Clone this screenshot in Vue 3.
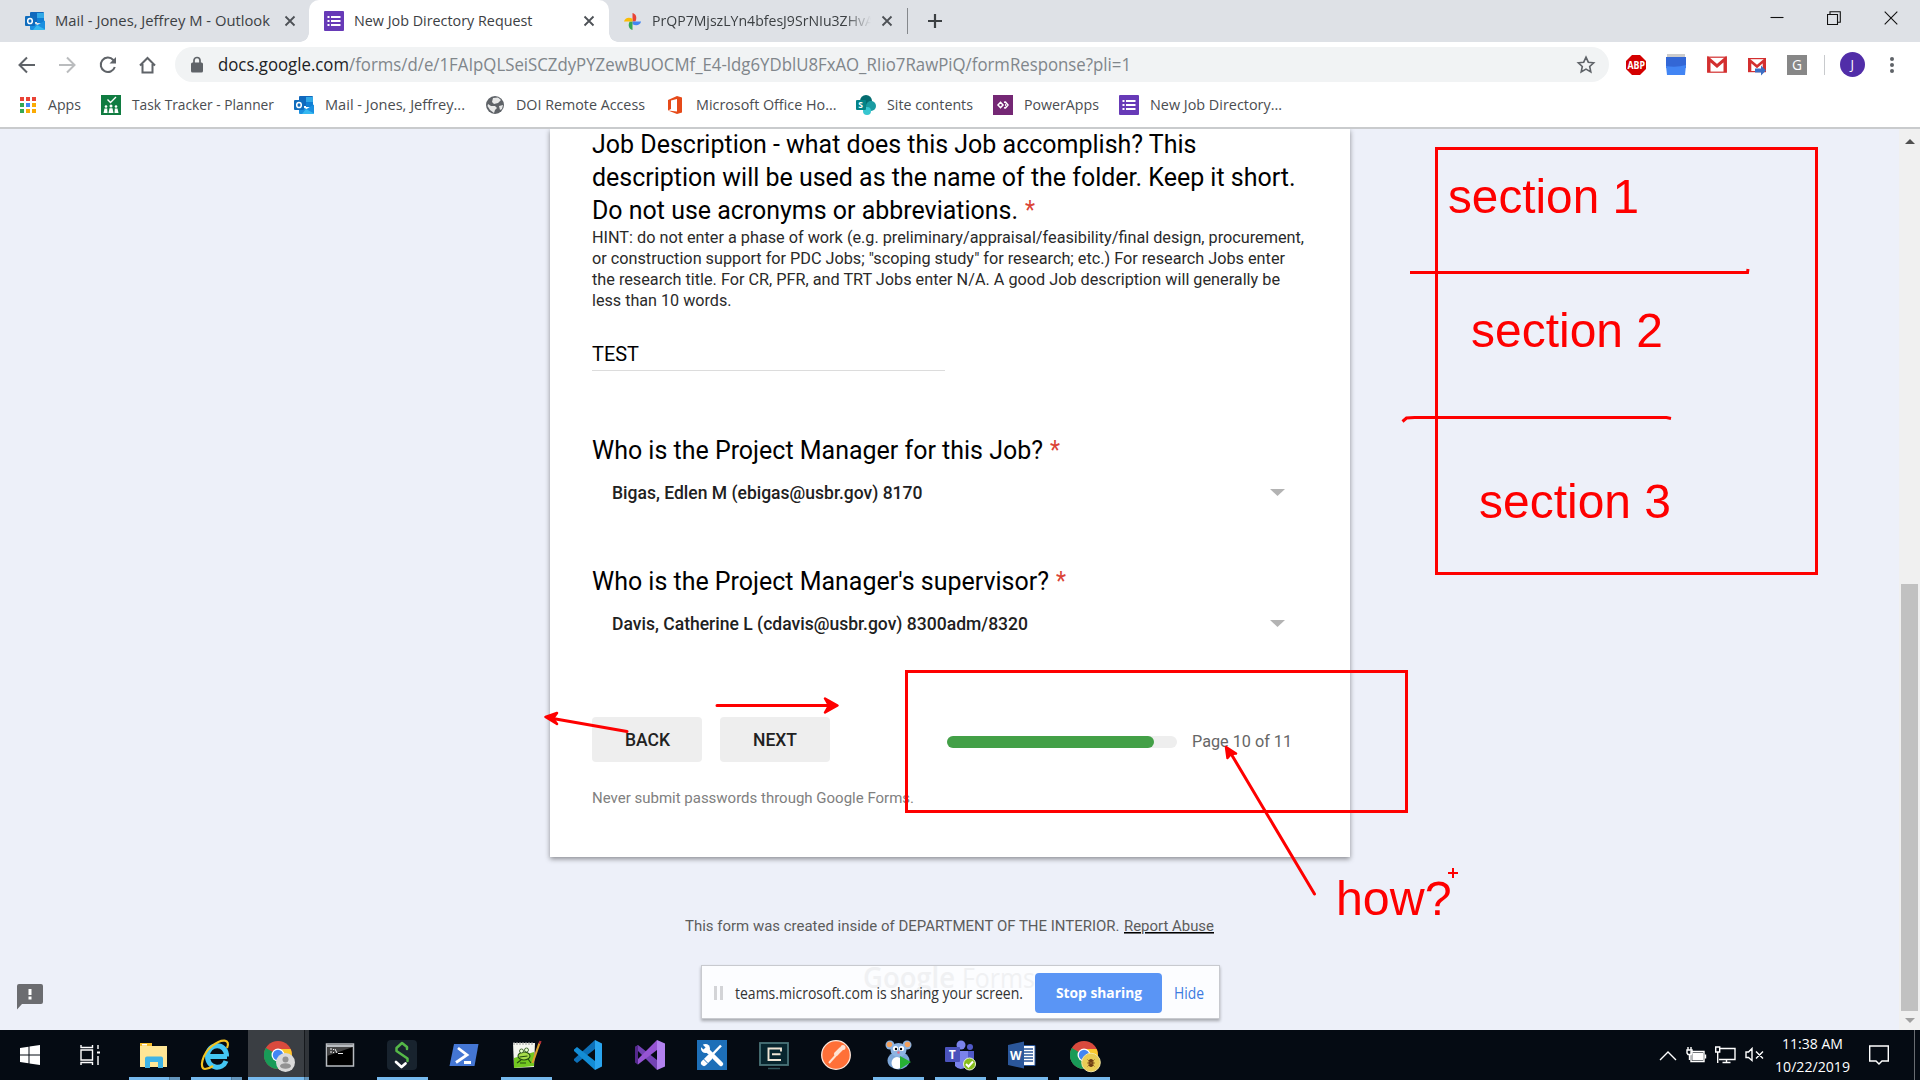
<script setup>
import { h } from 'vue'

// One line of text set to a fixed measure: w = width, h = line box height, b = baseline
const Fit = (p) =>
  h('svg', { width: p.w, height: p.h, style: 'display:block;overflow:visible;flex:none' }, [
    h('text', { x: 0, y: p.b, textLength: p.w, lengthAdjust: 'spacingAndGlyphs', fill: 'currentColor' }, p.t)
  ])
Fit.props = ['t', 'w', 'h', 'b']

const Ico = (p) => h('svg', { width: p.s, height: p.s, style: 'display:block;flex:none' }, [h('use', { href: '#' + p.n })])
Ico.props = ['n', 's']

const bookmarks = [
  { n: 'apps', t: 'Apps', w: 33 },
  { n: 'planner', t: 'Task Tracker - Planner', w: 142 },
  { n: 'outlook', t: 'Mail - Jones, Jeffrey...', w: 140 },
  { n: 'globe', t: 'DOI Remote Access', w: 129 },
  { n: 'office', t: 'Microsoft Office Ho...', w: 140.5 },
  { n: 'sharepoint', t: 'Site contents', w: 86 },
  { n: 'powerapps', t: 'PowerApps', w: 75 },
  { n: 'forms', t: 'New Job Directory...', w: 132 }
]
const hints = [
  { t: 'HINT: do not enter a phase of work (e.g. preliminary/appraisal/feasibility/final design, procurement,', w: 712 },
  { t: 'or construction support for PDC Jobs; "scoping study" for research; etc.) For research Jobs enter', w: 693 },
  { t: 'the research title. For CR, PFR, and TRT Jobs enter N/A. A good Job description will generally be', w: 688 },
  { t: 'less than 10 words.', w: 139.5 }
]
const questions = [
  { q: 'Who is the Project Manager for this Job?', w: 451, a: 'Bigas, Edlen M (ebigas@usbr.gov) 8170', aw: 310.5 },
  { q: "Who is the Project Manager's supervisor?", w: 457, a: 'Davis, Catherine L (cdavis@usbr.gov) 8300adm/8320', aw: 416 }
]
const tasks = [
  { n: 'explorer', c: 'open multi' },
  { n: 'ie', c: 'open multi' },
  { n: 'chromeuser', c: 'open multi active' },
  { n: 'cmd', c: '' },
  { n: 'snake', c: 'open' },
  { n: 'powershell', c: '' },
  { n: 'notepad', c: 'open' },
  { n: 'vscode', c: '' },
  { n: 'vs', c: '' },
  { n: 'tools', c: '' },
  { n: 'monitor', c: '' },
  { n: 'postman', c: '' },
  { n: 'mouse', c: 'open' },
  { n: 'teams', c: 'open' },
  { n: 'word', c: 'open' },
  { n: 'chromebug', c: 'open' }
]
</script>

<template>
  <div class="screen">
    <svg class="sheet" width="0" height="0">
      <symbol id="outlook" viewBox="0 0 20 20">
        <path d="M6 1h12a1 1 0 0 1 1 1v9H5V2a1 1 0 0 1 1-1z" fill="#1068bd" />
        <path d="M12 2h7v5h-7z" fill="#32a9e7" /><path d="M12 7h7v5h-7z" fill="#0f7ed4" />
        <path d="M5 10l7.500 4L20 9.500V18a1 1 0 0 1-1 1H6a1 1 0 0 1-1-1z" fill="#1a8fe0" />
        <path d="M12 14l8 4.500a1 1 0 0 1-1 .5H8z" fill="#35b8f1" />
        <rect y="5" width="10" height="10" rx="1" fill="#0f6cbd" />
        <ellipse cx="5" cy="10" rx="2.300" ry="2.600" fill="none" stroke="#fff" stroke-width="1.500" />
      </symbol>
      <symbol id="forms" viewBox="0 0 20 20">
        <rect width="20" height="20" rx="1" fill="#673ab7" />
        <g fill="#fff"><path d="M3.500 5h2v2h-2zM3.500 9h2v2h-2zM3.500 13h2v2h-2zM7 5h9.500v2H7zM7 9h9.500v2H7zM7 13h9.500v2H7z" /></g>
      </symbol>
      <symbol id="photos" viewBox="0 0 20 20">
        <path d="M10 1c4 1 5 5 3 9h-3z" fill="#e84335" /><path d="M19 10c-1 4-5 5-9 3v-3z" fill="#4285f4" />
        <path d="M10 19c-4-1-5-5-3-9h3z" fill="#34a853" /><path d="M1 10c1-4 5-5 9-3v3z" fill="#fbbc04" />
      </symbol>
      <symbol id="apps" viewBox="0 0 20 20">
        <g fill="#ea4335"><path d="M2 2h4v4H2zM8 2h4v4H8zM14 2h4v4h-4z" /></g>
        <path d="M2 8h4v4H2zM2 14h4v4H2z" fill="#34a853" /><path d="M8 8h4v4H8z" fill="#4285f4" />
        <path d="M14 8h4v4h-4zM8 14h4v4H8zM14 14h4v4h-4z" fill="#fbab04" />
      </symbol>
      <symbol id="planner" viewBox="0 0 20 20">
        <rect width="20" height="20" fill="#107c41" /><path d="M6.500 4.500l3 3L15 2" fill="none" stroke="#fff" stroke-width="1.400" />
        <g fill="#fff"><circle cx="5" cy="11.500" r="1.300" /><circle cx="10" cy="11" r="1.500" /><circle cx="15" cy="11.500" r="1.300" />
          <path d="M2.500 18l1-4.500h2.700l.3 4.500zM7.500 18l1-4.800h3l1 4.800zM13.500 18l.3-4.500h2.700l1 4.500z" /></g>
      </symbol>
      <symbol id="globe" viewBox="0 0 20 20">
        <circle cx="10" cy="10" r="9" fill="#5f6368" />
        <path d="M3 9l3 2h4l2 2-2 2-1 3-4-3-2.500-4zM8 3l5-.5L16 5l-3 3-4 1-2-2zM14 11l4-1-1 4-2 1z" fill="#fff" opacity=".85" />
      </symbol>
      <symbol id="office" viewBox="0 0 20 20">
        <path d="M3 5l9-4 5 1.500v15L12 19l-9-3.500 9 1V4L6 5.500v8.500l-3 1.500z" fill="#e64a19" />
      </symbol>
      <symbol id="sharepoint" viewBox="0 0 20 20">
        <circle cx="10" cy="6" r="6" fill="#036c70" /><circle cx="15" cy="11" r="5" fill="#1a9ba1" /><circle cx="11" cy="16" r="4" fill="#37c6d0" />
        <rect y="5" width="10" height="10" rx="1" fill="#038387" /><text x="2.200" y="13" font-size="8.500" font-weight="700" fill="#fff">S</text>
      </symbol>
      <symbol id="powerapps" viewBox="0 0 20 20">
        <rect width="20" height="20" fill="#742774" />
        <g fill="none" stroke="#fff" stroke-width="1.500"><path d="M7.500 7.300L10 10l-2.500 2.700L5 10z" /><path d="M11 7.300l1.500-.3L15 10l-2.500 3-1.500-.3" /></g><path d="M12 8.500l1.500 1.500-1.500 1.500z" fill="#fff" />
      </symbol>
      <symbol id="chrome" viewBox="0 0 28 28">
        <circle cx="14" cy="14" r="14" fill="#d94a3d" /><path d="M14 14L1.900 7A14 14 0 0 0 14 28z" fill="#199b58" />
        <path d="M14 8h12.600A14 14 0 0 1 14 28l6-11z" fill="#fbc92e" /><path d="M1.900 7l6.600 10.500L14 20l-3 7.700A14 14 0 0 1 1.900 7z" fill="#199b58" />
        <circle cx="14" cy="14" r="6.500" fill="#fff" /><circle cx="14" cy="14" r="5.200" fill="#4285f4" />
      </symbol>
      <symbol id="explorer" viewBox="0 0 36 36">
        <path d="M4 6h12v3h15v21H4z" fill="#ffe695" /><path d="M4 6h12v3H4z" fill="#f5bb2a" /><path d="M6 7h5v1.500H6z" fill="#fff" />
        <path d="M9 31V21.500a2 2 0 0 1 2-2h14a2 2 0 0 1 2 2V31h-5v-6h-8v6z" fill="#3fb4e6" />
      </symbol>
      <symbol id="ie" viewBox="0 0 36 36">
        <path d="M10.500 19.500H29M28.500 19.500C29 5 9.500 5.500 9.500 19c0 13 15 14.500 18.500 5" fill="none" stroke="#43c6f3" stroke-width="5" />
        <path d="M29 11C33 2 24 1 14 9S1 32 7 32c2 0 5-1 8-3" fill="none" stroke="#f4c321" stroke-width="2.200" />
      </symbol>
      <symbol id="chromeuser" viewBox="0 0 36 36">
        <use href="#chrome" x="4" y="4" width="28" height="28" />
        <circle cx="25.500" cy="25.500" r="9.500" fill="#d9d9d9" /><circle cx="25.500" cy="22.500" r="3" fill="#929292" /><ellipse cx="25.500" cy="29" rx="5.500" ry="2.800" fill="#929292" />
      </symbol>
      <symbol id="chromebug" viewBox="0 0 36 36">
        <use href="#chrome" x="4" y="4" width="28" height="28" />
        <circle cx="25" cy="25.500" r="9.300" fill="#e9cc56" stroke="#f4e6a0" /><ellipse cx="25" cy="26" rx="2.500" ry="4" fill="#6b3a13" />
        <path d="M21.500 22.500l7 7M28.500 22.500l-7 7M21 26h8" stroke="#8a5a22" stroke-width=".8" />
      </symbol>
      <symbol id="cmd" viewBox="0 0 36 36">
        <rect x="4.500" y="7" width="27" height="22" fill="#000" stroke="#b8bcc0" stroke-width="1.500" /><path d="M5 8h26v2H5z" fill="#b8bcc0" /><path d="M5 10h26l-26 9z" fill="#444" />
        <path d="M8 12h2M8 15h2M11.500 12v1M11.500 15v1M13 12l2 4M16 16.500h5" stroke="#eee" fill="none" />
      </symbol>
      <symbol id="snake" viewBox="0 0 36 36">
        <rect x="3" y="3" width="30" height="30" rx="4" fill="#18232e" />
        <path d="M23 12v-2l-5-4-5.500 5v3l11 7.500v2.500" fill="none" stroke="#55b848" stroke-width="2.500" stroke-linejoin="round" stroke-linecap="round" />
        <path d="M12 25l5.500 5 4-3.500" fill="none" stroke="#fff" stroke-width="2.700" stroke-linecap="round" stroke-linejoin="round" />
      </symbol>
      <symbol id="powershell" viewBox="0 0 36 36">
        <path d="M8 7h24.500l-4 22H3.500z" fill="#4476d3" /><path d="M12 11l9 7-11 7.500M18 25.500h7" fill="none" stroke="#fff" stroke-width="2.800" />
      </symbol>
      <symbol id="notepad" viewBox="0 0 36 36">
        <path d="M5 6h22l-1 24-20 1z" fill="#f4f6ee" /><path d="M6 21l20-6v14l-20 2z" fill="#73c820" />
        <path d="M6 5v3M9 5v3M12 5v3M15 5v3M18 5v3M21 5v3M24 5v3" stroke="#999" />
        <ellipse cx="16" cy="19" rx="6" ry="4" fill="#a6dc4a" stroke="#234c10" stroke-width="1.100" /><circle cx="13.500" cy="14" r="2" fill="#e9ffd0" stroke="#234c10" stroke-width=".8" /><circle cx="18.500" cy="13" r="2" fill="#e9ffd0" stroke="#234c10" stroke-width=".8" />
        <path d="M11.500 20l8-1M9 26l4-3M20 22l3 4M12 26h6" stroke="#234c10" stroke-width="1.200" />
        <path d="M31.500 6l-7 20" stroke="#dba12c" stroke-width="2.200" /><path d="M32.500 4l-1 3" stroke="#b8303a" stroke-width="2.200" />
      </symbol>
      <symbol id="vscode" viewBox="0 0 36 36">
        <path d="M25 3l7 3.500v23L25 33z" fill="#2aa5ef" /><path d="M25 3v9L7 26l-3-2.500v-1.500z" fill="#0d70b8" /><path d="M25 33v-9L7 10l-3 2.500V14z" fill="#138dd6" />
      </symbol>
      <symbol id="vs" viewBox="0 0 36 36">
        <path d="M3 10l3-2 19 15V33L6 14v9l-3 2z" fill="#7443b5" /><path d="M3 25l3 2.500L25 13V3L6 22z" fill="#9654d3" /><path d="M25 3l8 3.500v23L25 33z" fill="#b281ee" /><path d="M3 10l3-2v19.500L3 25z" fill="#54288c" />
      </symbol>
      <symbol id="tools" viewBox="0 0 36 36">
        <rect x="3" y="3" width="30" height="30" fill="#1d6fb8" /><path d="M12 12l15 15" stroke="#fff" stroke-width="4.500" stroke-linecap="round" />
        <circle cx="11.500" cy="11.500" r="4.500" fill="#fff" /><path d="M6 7l4.500 4.500" stroke="#1d6fb8" stroke-width="3" /><path d="M27 8.500L16 20" stroke="#fff" stroke-width="2.500" /><path d="M15 21l-5 5" stroke="#fff" stroke-width="6" stroke-linecap="round" /><path d="M9 21.500l5 5" stroke="#1d6fb8" />
      </symbol>
      <symbol id="monitor" viewBox="0 0 36 36">
        <rect x="4" y="6" width="28" height="22" fill="#07252e" stroke="#4a7479" stroke-width="1.800" /><path d="M12 31.500h12" stroke="#31545b" stroke-width="1.500" />
        <path d="M25 14.500v-3H12.500v11.500H25M16 17.300h8.500" fill="none" stroke="#efe5d5" stroke-width="1.900" />
      </symbol>
      <symbol id="postman" viewBox="0 0 36 36">
        <circle cx="18" cy="18" r="14.300" fill="#ff7038" stroke="#ffe8dc" stroke-width="1.300" /><path d="M11 26l9-10" stroke="#ffe2d3" stroke-width="2" /><path d="M18 17l5-5" stroke="#ffe2d3" stroke-width="4" stroke-linecap="round" /><circle cx="25" cy="10.500" r="2.500" fill="#ffe2d3" />
      </symbol>
      <symbol id="mouse" viewBox="0 0 36 36">
        <circle cx="10" cy="8" r="4.500" fill="#8db4e2" /><circle cx="27" cy="8" r="4.500" fill="#8db4e2" /><circle cx="9.500" cy="7.500" r="2.800" fill="#f3a15e" /><circle cx="27.500" cy="7.500" r="2.800" fill="#f3a15e" />
        <ellipse cx="18.500" cy="23.500" rx="11" ry="9" fill="#7ca6d8" /><ellipse cx="18.500" cy="13" rx="8" ry="7" fill="#8db4e2" /><ellipse cx="17" cy="26" rx="5.500" ry="6" fill="#fff" />
        <circle cx="15.500" cy="11.500" r="2.600" fill="#fff" /><circle cx="21.500" cy="11.500" r="2.600" fill="#fff" /><circle cx="16" cy="12" r="1.200" /><circle cx="21" cy="12" r="1.200" /><circle cx="18.500" cy="15.500" r="1.300" fill="#e56a86" />
        <path d="M20 19l11 6-11 7z" fill="#27b034" />
      </symbol>
      <symbol id="teams" viewBox="0 0 36 36">
        <circle cx="19" cy="8" r="4.500" fill="#7b83eb" /><circle cx="28" cy="10" r="3" fill="#5059c9" /><path d="M13 14h14v11a8 8 0 0 1-14 4z" fill="#7b83eb" /><path d="M26 14h6v10h-6z" fill="#5059c9" />
        <rect x="3" y="10" width="15" height="15" rx="1" fill="#4b53bc" /><text x="6.700" y="22" font-size="12" font-weight="700" fill="#fff">T</text>
        <circle cx="27.500" cy="27" r="6" fill="#86bd1b" stroke="#e8f5d0" /><path d="M24 27l2.500 2.500 4.500-5" fill="none" stroke="#fff" stroke-width="2" />
      </symbol>
      <symbol id="word" viewBox="0 0 36 36">
        <path d="M17 8.500h14v20H17z" fill="#fff" stroke="#2b579a" /><path d="M20 12h9M20 15h9M20 18h9M20 21h9M20 24h9" stroke="#2b579a" stroke-width="1.400" />
        <path d="M4 8l16-3.500v27L4 28z" fill="#2b579a" /><text x="6" y="22.500" font-size="12" font-weight="700" fill="#fff">W</text>
      </symbol>
    </svg>

    <header class="tabs">
      <div class="tab first"><Ico n="outlook" s="20" /><Fit class="tl" t="Mail - Jones, Jeffrey M - Outlook" w="215" h="42" b="26" /><svg class="x" width="14" height="14"><path d="M2.500 2.500l9 9M11.500 2.500l-9 9" /></svg></div>
      <div class="tab current"><Ico n="forms" s="20" /><Fit class="tl" t="New Job Directory Request" w="178.500" h="42" b="26" /><svg class="x" width="14" height="14"><path d="M2.500 2.500l9 9M11.500 2.500l-9 9" /></svg></div>
      <div class="tab third"><Ico n="photos" s="19" /><div class="fade"><Fit class="tl" t="PrQP7MjszLYn4bfesJ9SrNIu3ZHvA" w="222" h="42" b="26" /></div><svg class="x" width="14" height="14"><path d="M2.500 2.500l9 9M11.500 2.500l-9 9" /></svg></div>
      <svg class="plus" width="16" height="16"><path d="M8 1v14M1 8h14" /></svg>
      <div class="win">
        <svg width="14" height="14"><path d="M.5 6.500h13" /></svg>
        <svg width="14" height="14"><path d="M.5 3.500h10v10h-10zM3 3V.8h10.300v10.500H11" /></svg>
        <svg width="14" height="14"><path d="M.7.7l12.600 12.600M13.300.7L.7 13.300" /></svg>
      </div>
    </header>

    <nav class="toolbar">
      <div class="navs">
        <svg width="20" height="20" class="nv"><path d="M18 10H3M10 2.500L2.500 10l7.500 7.500" /></svg>
        <svg width="20" height="20" class="nv off"><path d="M2 10h15M10 2.500l7.500 7.500-7.500 7.500" /></svg>
        <svg width="20" height="20" class="nv"><path d="M16.800 12a7.200 7.200 0 1 1-1.500-7L17 7" /><path d="M18 2v6.500h-6.500z" class="solid" /></svg>
        <svg width="20" height="20" class="nv"><path d="M4.500 9v8.500h10V9M2 10.500L9.500 3l7.500 7.500" /></svg>
      </div>
      <div class="omni">
        <svg width="12" height="18"><rect y="6.500" width="12" height="10" rx="1.500" fill="#5f6368" /><path d="M3 7V4.500a3 3 0 0 1 6 0V7" fill="none" stroke="#5f6368" stroke-width="1.700" /></svg>
        <Fit class="host" t="docs.google.com" w="131" h="35" b="24" /><Fit class="path" t="/forms/d/e/1FAIpQLSeiSCZdyPYZewBUOCMf_E4-ldg6YDblU8FxAO_RIio7RawPiQ/formResponse?pli=1" w="782" h="35" b="24" />
        <svg class="star" width="20" height="20"><path d="M10 2.200l2.300 5 5.400.6-4 3.700 1.100 5.400-4.800-2.800-4.800 2.800 1.100-5.400-4-3.700 5.400-.6z" /></svg>
      </div>
      <div class="ext">
        <svg width="20" height="22"><path d="M6 1h8l6 6v8l-6 6H6l-6-6V7z" fill="#d40000" /><text x="1.500" y="15" font-size="11" font-weight="700" fill="#fff" textLength="17.500" lengthAdjust="spacingAndGlyphs">ABP</text></svg>
        <svg width="20" height="22"><path d="M1 0h18v4H1z" fill="#ccc" /><path d="M0 3h20v11H0z" fill="#3367d6" /><path d="M0 12q10 2 20-1l-1 10H1z" fill="#4285f4" /></svg>
        <svg width="20" height="22"><rect x=".7" y="3.200" width="18.600" height="15" fill="#fff" stroke="#d32f2f" stroke-width="1.200" /><path d="M2 18V5l8 7 8-7v13" fill="none" stroke="#d32f2f" stroke-width="3" /></svg>
        <svg width="20" height="22"><rect x="1.600" y="4.600" width="16.800" height="13" fill="#fff" stroke="#d32f2f" stroke-width="1.200" /><path d="M3 17V6.500l7 6 7-6V17" fill="none" stroke="#d32f2f" stroke-width="2.600" /><path d="M8 14.500h6v-3l5 5-5 5v-3H8z" fill="#3c6fc4" /></svg>
        <svg width="20" height="22"><rect y="1" width="20" height="20" fill="#878787" /><text x="5" y="16.200" font-size="14" fill="#fff" textLength="10" lengthAdjust="spacingAndGlyphs">G</text></svg>
        <i class="bar"></i>
        <b class="avatar">J</b>
        <svg class="dots" width="6" height="18"><circle cx="3" cy="3" r="2" /><circle cx="3" cy="9" r="2" /><circle cx="3" cy="15" r="2" /></svg>
      </div>
    </nav>

    <div class="bookmarks">
      <div v-for="m in bookmarks" :key="m.t" class="bm"><Ico :n="m.n" s="20" /><Fit :t="m.t" :w="m.w" h="36" b="23" /></div>
    </div>

    <main class="page">
      <div class="content">
        <section class="card">
          <Fit class="q" t="Job Description - what does this Job accomplish? This" w="604.500" h="33" b="24" />
          <Fit class="q" t="description will be used as the name of the folder. Keep it short." w="703.500" h="33" b="24" />
          <div class="qrow"><Fit class="q" t="Do not use acronyms or abbreviations." w="426" h="33" b="24" /><Fit class="q req" t="*" w="10" h="33" b="24" /></div>
          <Fit v-for="l in hints" :key="l.t" class="hint" :t="l.t" :w="l.w" h="21" b="15" />
          <div class="answer"><Fit t="TEST" w="47" h="34" b="25" /></div>
          <div v-for="k in questions" :key="k.q" class="question">
            <div class="qrow"><Fit class="q" :t="k.q" :w="k.w" h="33" b="24" /><Fit class="q req" t="*" w="10" h="33" b="24" /></div>
            <div class="select"><Fit :t="k.a" :w="k.aw" h="48" b="31" /><svg width="15" height="7"><path d="M0 0h15L7.500 7z" fill="#b3b3b3" /></svg></div>
          </div>
          <div class="nav">
            <div class="btn"><Fit t="BACK" w="45" h="45" b="29" /></div>
            <div class="btn"><Fit t="NEXT" w="44" h="45" b="29" /></div>
            <div class="progress"><div class="done"></div></div>
            <Fit class="pageno" t="Page 10 of 11" w="100" h="45" b="30" />
          </div>
          <Fit class="never" t="Never submit passwords through Google Forms." w="322" h="24" b="17" />
        </section>
        <footer class="foot"><Fit t="This form was created inside of DEPARTMENT OF THE INTERIOR." w="434.500" h="24" b="17" /><Fit class="abuse" t="Report Abuse" w="90" h="24" b="17" /></footer>
        <svg class="feedback" width="26" height="26"><path d="M2 0h22a2 2 0 0 1 2 2v16a2 2 0 0 1-2 2H5l-5 5.500V2a2 2 0 0 1 2-2z" fill="#6b6c70" /><path d="M11.500 5h3v6h-3zM11.500 12.500h3v3h-3z" fill="#fff" /></svg>
      </div>
      <div class="scroll">
        <svg width="10" height="5"><path d="M0 5h10L5 0z" fill="#505050" /></svg>
        <div class="thumb"></div>
        <svg width="10" height="5"><path d="M0 0h10L5 5z" fill="#a0a0a0" /></svg>
      </div>
    </main>

    <div class="share">
      <div class="ghost"><Fit class="g1" t="Google" w="92" h="32" b="22" /><Fit t="Forms" w="73" h="32" b="22" /></div>
      <i class="grip"></i>
      <Fit t="teams.microsoft.com is sharing your screen." w="288" h="52" b="32" />
      <div class="stop"><Fit t="Stop sharing" w="86" h="40" b="25" /></div>
      <Fit class="hide" t="Hide" w="30" h="52" b="32" />
    </div>

    <div class="taskbar">
      <div class="start"><svg width="20" height="20"><path d="M0 3l8.500-1.200V9.500H0zM9.500 1.600L20 0v9.500H9.500zM0 10.500h8.500v7.700L0 17zM9.500 10.500H20V20l-10.500-1.600z" fill="#fff" /></svg></div>
      <div class="view"><svg width="20" height="20" fill="none" stroke="#fff" stroke-width="1.400"><path d="M1 5h11.500v10H1zM1 0v2.500h11.500V0M1 20v-2.500h11.500V20M18 0v4M18 11v9" /><path d="M17 6.500h3v2h-3z" fill="#fff" stroke="none" /></svg></div>
      <div v-for="k in tasks" :key="k.n" class="task" :class="k.c"><Ico :n="k.n" s="36" /></div>
      <div class="tray">
        <svg width="18" height="12" class="ln"><path d="M1 11l8-8 8 8" /></svg>
        <svg width="21" height="16" class="ln"><path d="M5 4.500h13v10H5z" /><path d="M7 6.500h9.500v6H7z" fill="#fff" /><path d="M19.500 7.500v4M2 0v3M5 0v3M1 3h5v3l-1 1.500H2L1 6zM3.500 7v6" /></svg>
        <svg width="21" height="18" class="ln"><path d="M5 2.500h15v11H4M11.500 13.500v3M7.500 16.500h8M.7 1h4v5h-4zM2.700 6v11" /></svg>
        <svg width="19" height="16" class="ln"><path d="M1 5h2.500L7 1.500v12L3.500 10.500H1zM11 4.500l7 7M18 4.500l-7 7" /></svg>
        <div class="clock"><Fit t="11:38 AM" w="61" h="23" b="17" /><Fit t="10/22/2019" w="75" h="23" b="17" /></div>
        <svg width="20" height="20" class="ln"><path d="M.7 1h18.600v15H13l-3 3-3-3H.7z" /></svg>
        <i class="peek"></i>
      </div>
    </div>

    <svg class="ink" width="1920" height="1080" viewBox="0 0 1920 1080">
      <g fill="none" stroke="#fe0000" stroke-width="3">
        <rect x="1436.500" y="148.500" width="380" height="425" />
        <rect x="906.500" y="671.500" width="500" height="140" />
        <path d="M1410 272.500h337.500l.5-3.500M1402.500 421.500l4-3.500 8-.5h252l4.500 1" />
        <path d="M717 705.500h118M627 731.500L550 718M1314.500 894L1230 752" stroke-linecap="round" />
        <path d="M1448 873h10M1453 868v10" stroke-width="2" />
      </g>
      <g fill="#fe0000" stroke="#fe0000" stroke-width="2.500" stroke-linejoin="round">
        <path d="M837.500 705.500l-12.500-7 4 7-4 7zM545.500 717l11.500-4-4 5.500 4 5.500zM1226 747l10 6.500-5 .5-3.500 4z" />
      </g>
      <g fill="#fe0000" font-family="'Liberation Sans', Arial, sans-serif" font-size="49">
        <text x="1448" y="213" textLength="191" lengthAdjust="spacingAndGlyphs">section 1</text>
        <text x="1471" y="347" textLength="192" lengthAdjust="spacingAndGlyphs">section 2</text>
        <text x="1479" y="518" textLength="192" lengthAdjust="spacingAndGlyphs">section 3</text>
        <text x="1336" y="915" textLength="115.500" lengthAdjust="spacingAndGlyphs">how?</text>
      </g>
    </svg>
  </div>
</template>

<style>
body { margin: 0; overflow: hidden; }
</style>

<style scoped>
.screen { position: relative; width: 1920px; height: 1080px; display: flex; flex-direction: column; background: #fff; overflow: hidden; font-family: "Open Sans", "Noto Sans", sans-serif; font-size: 15px; color: #3c4043; }
.sheet { display: none; }
.tabs { height: 42px; background: #dee1e6; display: flex; align-items: center; flex: none; }
.tab { height: 42px; width: 300px; box-sizing: border-box; display: flex; align-items: center; gap: 10px; padding: 0 13px 0 15px; }
.tab.first { width: 309px; padding: 0 12px 0 25px; }
.tab.current { position: relative; background: #fff; border-radius: 10px 10px 0 0; }
.tab.current::before, .tab.current::after { content: ""; position: absolute; bottom: 0; width: 9px; height: 9px; }
.tab.current::before { left: -9px; background: radial-gradient(circle at 0 0, transparent 8.500px, #fff 9px); }
.tab.current::after { right: -9px; background: radial-gradient(circle at 100% 0, transparent 8.500px, #fff 9px); }
.tab.third { width: 299px; height: 26px; padding-left: 14px; border-right: 1px solid #85888c; }
.fade { width: 219px; overflow: hidden; margin-right: -2px; mask-image: linear-gradient(90deg, #000 88%, transparent); }
.x { margin-left: auto; flex: none; stroke: #4d5156; stroke-width: 1.800; }
.plus { margin-left: 19px; stroke: #3c4043; stroke-width: 2.200; }
.win { margin-left: auto; display: flex; gap: 43px; padding-right: 22px; margin-top: -6px; fill: none; stroke: #111; stroke-width: 1.100; }
.toolbar { height: 45px; flex: none; display: flex; align-items: center; }
.navs { display: flex; gap: 20.300px; padding-left: 17px; width: 158px; flex: none; }
.nv { fill: none; stroke: #5f6368; stroke-width: 2; flex: none; }
.nv .solid { fill: #5f6368; stroke: none; }
.nv.off { stroke: #babcbe; }
.omni { width: 1434px; height: 35px; box-sizing: border-box; padding: 0 13px 0 16px; border-radius: 18px; background: #f1f3f4; display: flex; align-items: center; font-size: 17.500px; flex: none; }
.host { color: #202124; margin-left: 15px; }
.path { color: #80868b; }
.star { margin-left: auto; fill: none; stroke: #5f6368; stroke-width: 1.600; }
.ext { display: flex; align-items: center; gap: 20.300px; padding-left: 17px; }
.bar { width: 1px; height: 20px; background: #c8cacd; margin: 0 -5px 0 -3px; }
.avatar { width: 25px; height: 25px; margin-left: -1px; border-radius: 50%; background: #512da8; color: #fff; font-weight: 400; font-size: 13px; line-height: 25px; text-align: center; }
.dots { fill: #5f6368; margin-left: 4px; }
.bookmarks { height: 40px; box-sizing: border-box; flex: none; padding: 0 0 4px 17.500px; display: flex; align-items: center; gap: 20.400px; }
.bm { display: flex; align-items: center; gap: 10.500px; color: #4a4d51; }
.page { height: 903px; box-sizing: border-box; border-top: 2px solid #c9cbcd; flex: none; display: flex; background: #edf0f9; font-family: Roboto, sans-serif; }
.content { position: relative; flex: 1; }
.card { width: 800px; height: 728px; box-sizing: border-box; margin-left: 550px; padding: 0 42px; background: #fff; box-shadow: 0 2px 5px rgba(0, 0, 0, .42); clip-path: inset(0 -8px -10px -8px); }
.q { font-size: 25px; color: #000; }
.qrow { display: flex; gap: 7px; }
.req { color: #db4437; }
.hint { font-size: 16px; color: #2a2a2a; }
.answer { margin: 24px 0 14px; width: 353px; border-bottom: 1px solid #dcdcdc; font-size: 20px; color: #000; }
.question { padding-top: 50px; }
.select { height: 48px; padding: 0 23px 0 20px; display: flex; align-items: center; justify-content: space-between; font-size: 17.500px; font-weight: 500; color: #212121; }
.nav { margin-top: 70px; height: 45px; display: flex; align-items: center; }
.btn { width: 110px; height: 45px; margin-right: 18px; border-radius: 4px; background: #eee; display: flex; justify-content: center; font-size: 17.500px; font-weight: 500; color: #212121; }
.progress { margin: 5px 15px 0 99px; width: 230px; height: 12px; border-radius: 6px; background: #eee; }
.done { width: 207px; height: 12px; border-radius: 6px; background: #43a047; }
.pageno { font-size: 17px; color: #666; }
.never { font-size: 15px; color: #808080; margin-top: 24px; }
.foot { margin: 57px 0 0 685px; display: flex; gap: 4.500px; font-size: 15.500px; color: #5c5c5c; }
.abuse { text-decoration: underline; }
.feedback { position: absolute; left: 17px; bottom: 20px; }
.scroll { width: 17px; padding: 10px 2px 7px; background: #f0f0f0; display: flex; flex-direction: column; align-items: center; }
.thumb { width: 17px; height: 427px; margin: auto 0 7px; background: #c1c1c1; }
.share { position: absolute; left: 701px; top: 965px; width: 519px; height: 54px; box-sizing: border-box; border: 1px solid #c8cacf; background: #fcfdff; box-shadow: 0 2px 3px rgba(0, 0, 0, .3); display: flex; align-items: center; padding: 1px 0 0 12px; font-size: 16px; color: #333; }
.ghost { position: absolute; left: 161px; top: 0; display: flex; gap: 7px; color: #f0f1f3; font-size: 28px; }
.g1 { font-weight: 600; }
.grip { width: 3px; height: 14px; border: solid #d3d4d7; border-width: 0 3px; margin-right: 12px; }
.share > * { position: relative; }
.share > .ghost { position: absolute; }
.stop { width: 127px; height: 40px; margin: 0 12px 0 12px; border-radius: 4px; background: #5a95f5; color: #fff; font-weight: 700; font-size: 15px; display: flex; justify-content: center; }
.hide { color: #3d7be0; }
.taskbar { height: 50px; flex: none; background: #050b13; display: flex; }
.start, .view { display: flex; align-items: center; justify-content: center; width: 60px; }
.view { width: 63px; box-sizing: border-box; padding-right: 3px; }
.task { position: relative; width: 62px; height: 50px; display: flex; align-items: center; justify-content: center; flex: none; }
.open::after { content: ""; position: absolute; left: 6px; right: 5px; bottom: 0; height: 3px; background: #76b9ed; }
.multi::after { background: linear-gradient(90deg, #76b9ed 40px, #39607d 40px, #6495bb 41px); }
.active { background: linear-gradient(90deg, transparent 1px, #3a3e43 1px 57px, #16191d 57px 58px, #303439 58px); }
.active::after { left: 1px; right: 0; background: linear-gradient(90deg, #76b9ed 56px, #39607d 56px, #6495bb 57px); }
.tray { margin-left: auto; display: flex; align-items: center; gap: 9px; color: #fff; font-size: 15px; }
.ln { fill: none; stroke: #fff; stroke-width: 1.400; margin-left: -.5px; }
.clock { width: 75px; margin: 0 11px 0 2px; display: flex; flex-direction: column; align-items: center; }
.peek { width: 1px; height: 50px; margin: 0 5px 0 16px; background: #686c71; }
.ink { position: absolute; inset: 0; pointer-events: none; }
</style>
